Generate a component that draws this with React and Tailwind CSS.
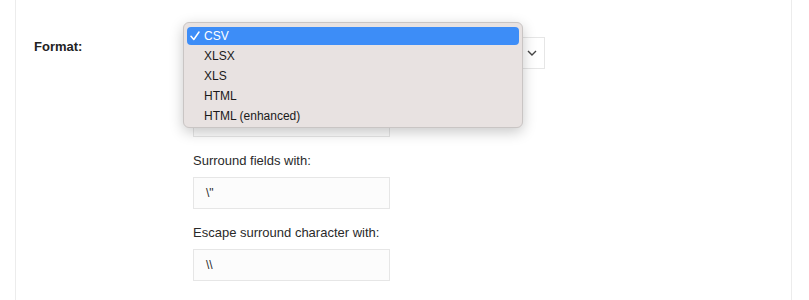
import React from "react";

const font = { fontFamily: '"Liberation Sans", Arial, sans-serif' };

function Field({ label, value, hideLabel }) {
  return (
    <div className="flex flex-col">
      {hideLabel ? (
        <div className="h-[16px] mb-[8px]" />
      ) : (
        <div className="text-[13px] leading-[16px] text-[#2a2a2a] mb-[8px]">{label}</div>
      )}
      <div className="w-[197px] h-[32px] border border-[#e6e6e6] bg-[#fcfcfc] flex items-center pl-[12px] text-[12px] text-[#2a2a2a]">
        {value}
      </div>
    </div>
  );
}

export default function App() {
  const items = ["CSV", "XLSX", "XLS", "HTML", "HTML (enhanced)"];
  return (
    <div className="w-[809px] h-[300px] bg-white overflow-hidden" style={font}>
      <div className="ml-[15px] w-[777px] h-[300px] border-x border-[#ececec] pl-[18px] pt-[37px] flex">
        <div className="w-[159px] pt-[2px] text-[13px] leading-[16px] font-bold text-[#222]">Format:</div>
        <div className="flex flex-col relative">
          <div className="w-[352px] h-[32px] border border-[#e6e6e6] bg-white flex items-center justify-end pr-[7px] mb-[12px]">
            <svg width="10" height="6" viewBox="0 0 10 6" fill="none">
              <path d="M1 1 L5 5 L9 1" stroke="#444" strokeWidth="1.4" />
            </svg>
          </div>
          <div className="flex flex-col gap-[16px]">
            <Field hideLabel value="" />
            <Field label="Surround fields with:" value={'\\"'} />
            <Field label="Escape surround character with:" value={'\\\\'} />
          </div>

          <div className="absolute left-[-10px] top-[-15px] w-[340px] h-[106px] rounded-[6px] bg-[#e8e2e1] border border-[#c9c5c4] shadow-[0_4px_14px_rgba(0,0,0,0.22)] pt-[3px] px-[3px]">
            {items.map((it, i) => (
              <div key={it} className="h-[20px] py-[1px]">
                <div
                  className={
                    "h-full rounded-[4px] flex items-center relative pl-[17px] text-[12px] " +
                    (i === 0 ? "bg-[#3d8df7] text-white" : "text-[#1a1a1a]")
                  }
                >
                  {i === 0 && (
                    <svg className="absolute left-[3px] top-[4px]" width="10" height="10" viewBox="0 0 10 10" fill="none">
                      <path d="M1 5.2 L3.8 8.5 L9 1" stroke="white" strokeWidth="1.5" strokeLinecap="round" strokeLinejoin="round" />
                    </svg>
                  )}
                  {it}
                </div>
              </div>
            ))}
          </div>
        </div>
      </div>
    </div>
  );
}
